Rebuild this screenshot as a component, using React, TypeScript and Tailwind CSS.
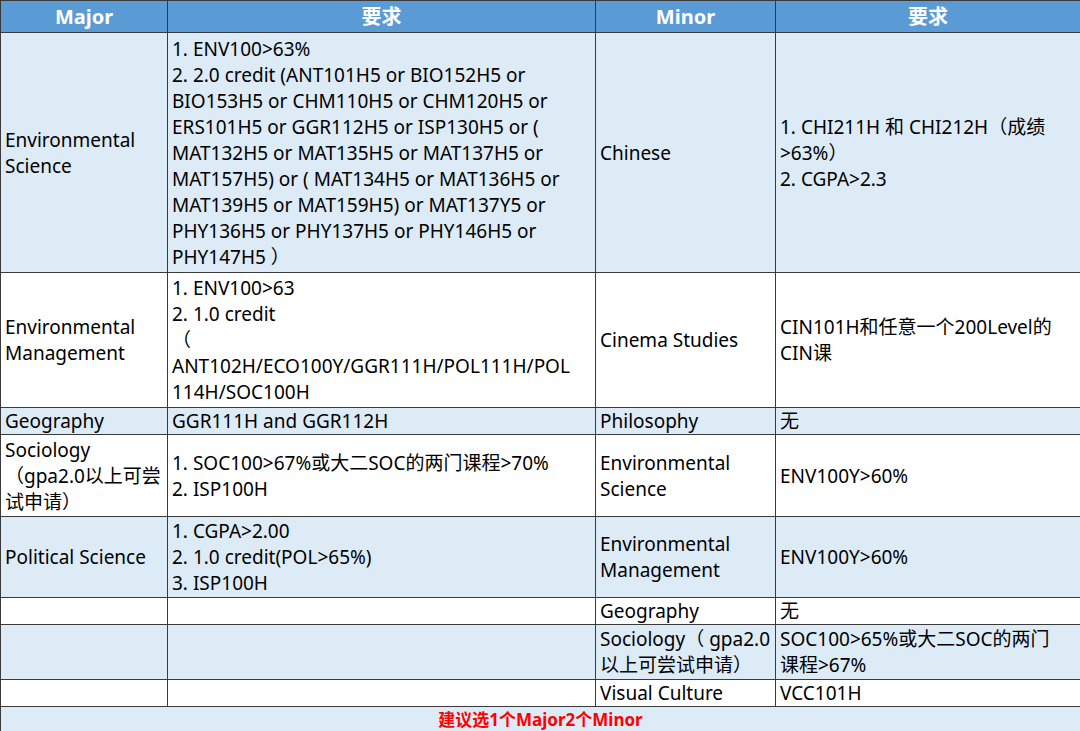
import React from "react";

const lines = (...a: string[]) => a.map((s, i) => (
  <React.Fragment key={i}>{i > 0 && <br />}{s}</React.Fragment>
));

export default function App() {
  const L = "bg-[#ddebf7]";
  const W = "bg-white";
  const td = "border border-[#3a3a3a] px-[4px] py-0 align-middle text-[19px] leading-[26px] text-black whitespace-nowrap overflow-hidden";
  const rows: { h: number; bg: string; c: React.ReactNode[] }[] = [
    { h: 240, bg: L, c: [
      lines("Environmental", "Science"),
      lines("1. ENV100>63%", "2. 2.0 credit (ANT101H5 or BIO152H5 or", "BIO153H5 or CHM110H5 or CHM120H5 or", "ERS101H5 or GGR112H5 or ISP130H5 or (", "MAT132H5 or MAT135H5 or MAT137H5 or", "MAT157H5) or ( MAT134H5 or MAT136H5 or", "MAT139H5 or MAT159H5) or MAT137Y5 or", "PHY136H5 or PHY137H5 or PHY146H5 or", "PHY147H5 ）"),
      "Chinese",
      lines("1. CHI211H 和 CHI212H（成绩", ">63%）", "2. CGPA>2.3"),
    ] },
    { h: 135, bg: W, c: [
      lines("Environmental", "Management"),
      lines("1. ENV100>63", "2. 1.0 credit", "（", "ANT102H/ECO100Y/GGR111H/POL111H/POL", "114H/SOC100H"),
      "Cinema Studies",
      lines("CIN101H和任意一个200Level的", "CIN课"),
    ] },
    { h: 26, bg: L, c: ["Geography", "GGR111H and GGR112H", "Philosophy", "无"] },
    { h: 82, bg: W, c: [
      lines("Sociology", "（gpa2.0以上可尝", "试申请）"),
      lines("1. SOC100>67%或大二SOC的两门课程>70%", "2. ISP100H"),
      lines("Environmental", "Science"),
      "ENV100Y>60%",
    ] },
    { h: 81, bg: L, c: [
      "Political Science",
      lines("1. CGPA>2.00", "2. 1.0 credit(POL>65%)", "3. ISP100H"),
      lines("Environmental", "Management"),
      "ENV100Y>60%",
    ] },
    { h: 26, bg: W, c: ["", "", "Geography", "无"] },
    { h: 55, bg: L, c: ["", "", lines("Sociology（ gpa2.0", "以上可尝试申请）"), lines("SOC100>65%或大二SOC的两门", "课程>67%")] },
    { h: 27, bg: W, c: ["", "", "Visual Culture", "VCC101H"] },
  ];
  return (
    <div className="w-[1080px] h-[731px] overflow-hidden bg-white" style={{ fontFamily: '"Noto Sans","Noto Sans CJK SC",sans-serif' }}>
      <table className="w-[1080px] table-fixed border-collapse">
        <colgroup>
          <col className="w-[167px]" />
          <col className="w-[428px]" />
          <col className="w-[180px]" />
          <col className="w-[305px]" />
        </colgroup>
        <tbody>
          <tr className="h-[32px] bg-[#5b9bd5]">
            {["Major", "要求", "Minor", "要求"].map((t, i) => (
              <td key={i} className="border border-[#3a3a3a] text-center text-white font-bold text-[20px] leading-[24px]">{t}</td>
            ))}
          </tr>
          {rows.map((r, i) => (
            <tr key={i} className={r.bg} style={{ height: r.h }}>
              {r.c.map((c, j) => (
                <td key={j} className={td}>{c}</td>
              ))}
            </tr>
          ))}
          <tr className={`h-[26px] ${L}`}>
            <td colSpan={4} className="border border-[#3a3a3a] text-center text-[#ff0000] font-bold text-[17px] leading-[22px]">建议选1个Major2个Minor</td>
          </tr>
        </tbody>
      </table>
    </div>
  );
}
